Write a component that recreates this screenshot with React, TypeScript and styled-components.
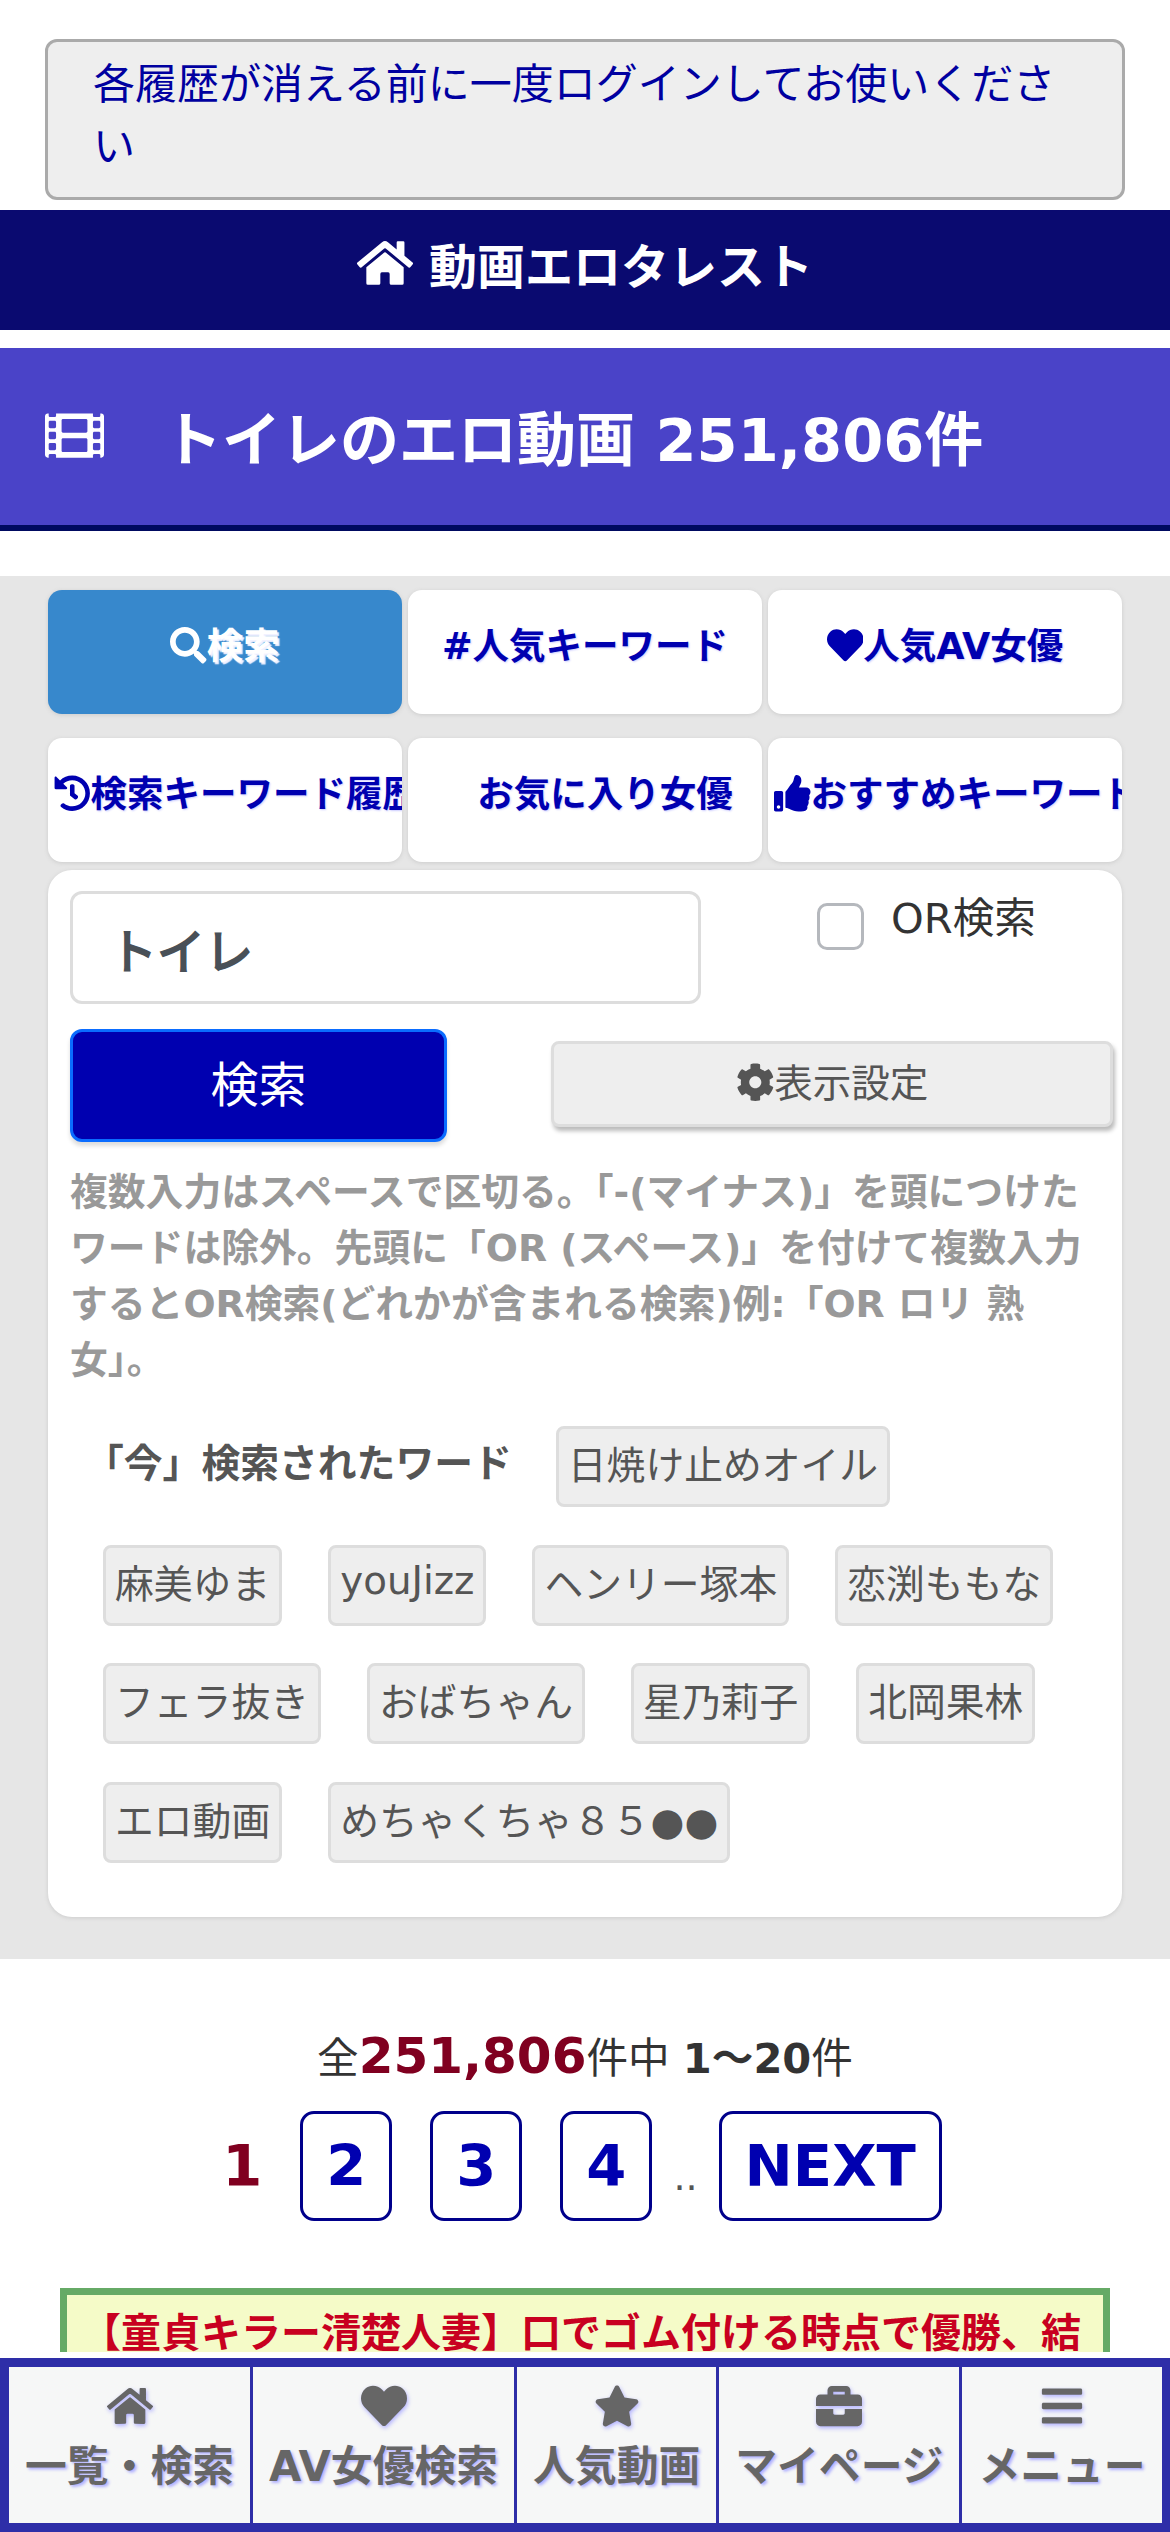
import React from 'react';
import styled, { createGlobalStyle } from 'styled-components';
import {
  FaBars,
  FaBriefcase,
  FaCog,
  FaFilm,
  FaHeart,
  FaHistory,
  FaHome,
  FaSearch,
  FaStar,
  FaThumbsUp,
} from 'react-icons/fa';

const GlobalStyle = createGlobalStyle`
  html, body {
    margin: 0;
    padding: 0;
    background: #fff;
    font-family: 'DejaVu Sans', 'Noto Sans CJK JP', sans-serif;
  }
  * {
    box-sizing: border-box;
  }
  svg {
    height: 1em;
    width: auto;
    vertical-align: -0.125em;
  }
`;

const Screen = styled.div`
  height: 100vh;
  display: flex;
  flex-direction: column;
  overflow: hidden;
`;

const Content = styled.main`
  flex: 1;
  min-height: 0;
  overflow: hidden;
  padding-top: 39px;
`;

const Notice = styled.div`
  margin: 0 45px 10px;
  padding: 12px 45px 19px;
  border: 3px solid #aaa;
  border-radius: 12px;
  background: #eee;
  color: #0000a0;
  font-size: 42px;
  line-height: 62px;
`;

const SiteBar = styled.div`
  height: 120px;
  padding-bottom: 14px;
  display: flex;
  align-items: center;
  justify-content: center;
  gap: 16px;
  background: #0a0a70;
  color: #fff;
  font-size: 48px;
  font-weight: 700;

  svg {
    font-size: 56px;
  }
`;

const TitleBar = styled.h1`
  margin: 18px 0 45px;
  height: 183px;
  padding: 0 0 2px 45px;
  display: flex;
  align-items: center;
  gap: 59px;
  background: #4a43c8;
  border-bottom: 6px solid #000a60;
  color: #fff;
  font-size: 59px;
  font-weight: 700;
  white-space: nowrap;
`;

const SearchArea = styled.section`
  padding: 14px 48px 42px;
  background: #e6e6e6;
`;

const Tabs = styled.div`
  display: grid;
  grid-template-columns: repeat(3, 354px);
  column-gap: 6px;
  row-gap: 24px;
  margin-bottom: 8px;
`;

const Tab = styled.a<{ $active?: boolean }>`
  height: 124px;
  padding: 32px 6px 0;
  overflow: hidden;
  white-space: nowrap;
  text-align: center;
  border-radius: 14px;
  background: ${(p) => (p.$active ? '#3788cc' : '#fff')};
  color: ${(p) => (p.$active ? '#fff' : '#0000b0')};
  box-shadow: 0 1px 4px #ccc;
  font-size: 36.5px;
  font-weight: 700;
  line-height: 50px;
  text-shadow: ${(p) => (p.$active ? '2px 2px 1px #f2f2ff' : '1px 1px 2px #ccccff')};
`;

const BlankIcon = styled.span`
  display: inline-block;
  width: 40px;
`;

const Panel = styled.div`
  padding: 21px 9px 36px 22px;
  background: #fff;
  border-radius: 24px;
  box-shadow: 0 1px 4px #ccc;
`;

const InputRow = styled.div`
  display: flex;
  align-items: flex-start;
`;

const KeywordInput = styled.input`
  width: 631px;
  height: 113px;
  padding: 0 36px;
  border: 3px solid #ddd;
  border-radius: 12px;
  background: #fff;
  color: #495057;
  font-family: inherit;
  font-size: 48px;
  -webkit-text-stroke: 2px #495057;
  outline: none;
`;

const OrLabel = styled.label`
  margin-left: 116px;
  display: flex;
  align-items: flex-start;
  gap: 27px;
  color: #333;
  font-size: 41.6px;
  line-height: 56px;
`;

const OrCheck = styled.input`
  appearance: none;
  width: 47px;
  height: 47px;
  margin: 12px 0 0;
  border: 3px solid #b5b8bd;
  border-radius: 10px;
  background: #fff;
`;

const ButtonRow = styled.div`
  margin-top: 25px;
  display: flex;
  align-items: flex-start;
  justify-content: space-between;
`;

const SubmitButton = styled.button`
  width: 377px;
  height: 113px;
  padding: 0 0 9px;
  border: 3px solid #0a6cff;
  border-radius: 12px;
  background: #0000b0;
  box-shadow: 0 4px 4px #ddd;
  color: #fff;
  font-family: inherit;
  font-size: 48px;
`;

const SettingsButton = styled.button`
  width: 562px;
  height: 86px;
  margin-top: 12px;
  padding: 0 0 8px;
  border: 3px solid #ddd;
  border-radius: 8px;
  background: #eee;
  box-shadow: 2px 4px 4px #bbb;
  color: #555;
  font-family: inherit;
  font-size: 38.6px;
`;

const HelpText = styled.p`
  margin: 22px 13px 0 0;
  color: #999;
  font-size: 37.8px;
  font-weight: 700;
  line-height: 56px;
`;

const WordList = styled.div`
  margin-top: 19px;
  padding-left: 10px;
  display: flex;
  flex-wrap: wrap;
  align-items: center;
`;

const WordLabel = styled.strong`
  margin: 0 21px 13px 5px;
  color: #555;
  font-size: 38.8px;
`;

const WordChip = styled.a`
  height: 81px;
  margin: 19px 23px 18.5px;
  padding: 0 9px 9px;
  display: flex;
  align-items: center;
  border: 3px solid #ddd;
  border-radius: 8px;
  background: #eee;
  color: #555;
  font-size: 38.8px;
  white-space: nowrap;
`;

const Counter = styled.p`
  margin: 61px 0 0;
  text-align: center;
  color: #333;
  font-size: 41.6px;
  line-height: 72px;
`;

const CountStrong = styled.b`
  color: #800020;
  font-size: 50px;
`;

const Pager = styled.nav`
  margin-top: 16px;
  padding-right: 6px;
  display: flex;
  align-items: center;
  justify-content: center;
`;

const PageNow = styled.span`
  margin: 0 19px;
  color: #800020;
  font-size: 57.6px;
  font-weight: 700;
`;

const PageLink = styled.a`
  height: 110px;
  margin: 0 19px;
  padding: 0 23px;
  display: flex;
  align-items: center;
  border: 3px solid #00008b;
  border-radius: 14px;
  color: #0000b0;
  font-size: 57.6px;
  font-weight: 700;
`;

const PageDots = styled.span`
  margin: 22px 2px 0;
  color: #555;
  font-size: 38px;
`;

const AdCard = styled.div`
  margin: 67px 60px 0;
  height: 200px;
  padding: 10px 14px;
  border: 7px solid #66aa66;
  background: #f5fbc8;
  color: #c80020;
  font-size: 40px;
  font-weight: 700;
  line-height: 56px;
  white-space: nowrap;
  overflow: hidden;
`;

const BottomNav = styled.nav`
  flex: none;
  margin-top: 6px;
  height: 174px;
  padding: 9px 12px 9px 9px;
  display: flex;
  gap: 3px;
  background: #2e2ea8;
`;

const NavItem = styled.a`
  padding: 16px 16px 0;
  display: flex;
  flex-direction: column;
  align-items: center;
  background: #f6f7f7;
  color: #666;
  font-size: 41.8px;
  font-weight: 700;
  line-height: 62px;
  text-shadow: 2px 2px 3px #b0b0ff;
  white-space: nowrap;

  svg {
    font-size: 46px;
    margin-bottom: 7px;
    filter: drop-shadow(1px 2px 2px #b0b0ff);
  }
`;

const tabs = [
  { icon: <FaSearch />, label: '検索', active: true },
  { icon: '#', label: '人気キーワード' },
  { icon: <FaHeart />, label: '人気AV女優' },
  { icon: <FaHistory />, label: '検索キーワード履歴' },
  { icon: <BlankIcon />, label: 'お気に入り女優' },
  { icon: <FaThumbsUp />, label: 'おすすめキーワード' },
];

const words = [
  '麻美ゆま',
  'youJizz',
  'ヘンリー塚本',
  '恋渕ももな',
  'フェラ抜き',
  'おばちゃん',
  '星乃莉子',
  '北岡果林',
  'エロ動画',
  'めちゃくちゃ８５●●',
];

const navItems = [
  { icon: <FaHome />, label: '一覧・検索' },
  { icon: <FaHeart />, label: 'AV女優検索' },
  { icon: <FaStar />, label: '人気動画' },
  { icon: <FaBriefcase />, label: 'マイページ' },
  { icon: <FaBars />, label: 'メニュー' },
];

const App = () => {
  return (
    <Screen>
      <GlobalStyle />
      <Content>
        <Notice>各履歴が消える前に一度ログインしてお使いください</Notice>
        <SiteBar>
          <FaHome />
          <span>動画エロタレスト</span>
        </SiteBar>
        <TitleBar>
          <FaFilm />
          <span>トイレのエロ動画 251,806件</span>
        </TitleBar>
        <SearchArea>
          <Tabs>
            {tabs.map((tab) => (
              <Tab key={tab.label} $active={tab.active}>
                {tab.icon}
                {tab.label}
              </Tab>
            ))}
          </Tabs>
          <Panel>
            <InputRow>
              <KeywordInput type='text' defaultValue='トイレ' />
              <OrLabel>
                <OrCheck type='checkbox' />
                OR検索
              </OrLabel>
            </InputRow>
            <ButtonRow>
              <SubmitButton>検索</SubmitButton>
              <SettingsButton>
                <FaCog />
                表示設定
              </SettingsButton>
            </ButtonRow>
            <HelpText>
              複数入力はスペースで区切る。「-(マイナス)」を頭につけたワードは除外。先頭に「OR (スペース)」を付けて複数入力するとOR検索(どれかが含まれる検索)例:「OR ロリ 熟女」。
            </HelpText>
            <WordList>
              <WordLabel>「今」検索されたワード</WordLabel>
              <WordChip>日焼け止めオイル</WordChip>
              {words.map((word) => (
                <WordChip key={word}>{word}</WordChip>
              ))}
            </WordList>
          </Panel>
        </SearchArea>
        <Counter>
          全<CountStrong>251,806</CountStrong>件中 <b>1〜20</b>件
        </Counter>
        <Pager>
          <PageNow>1</PageNow>
          <PageLink>2</PageLink>
          <PageLink>3</PageLink>
          <PageLink>4</PageLink>
          <PageDots>..</PageDots>
          <PageLink>NEXT</PageLink>
        </Pager>
        <AdCard>【童貞キラー清楚人妻】口でゴム付ける時点で優勝、結</AdCard>
      </Content>
      <BottomNav>
        {navItems.map((item) => (
          <NavItem key={item.label}>
            {item.icon}
            {item.label}
          </NavItem>
        ))}
      </BottomNav>
    </Screen>
  );
};

export default App;
